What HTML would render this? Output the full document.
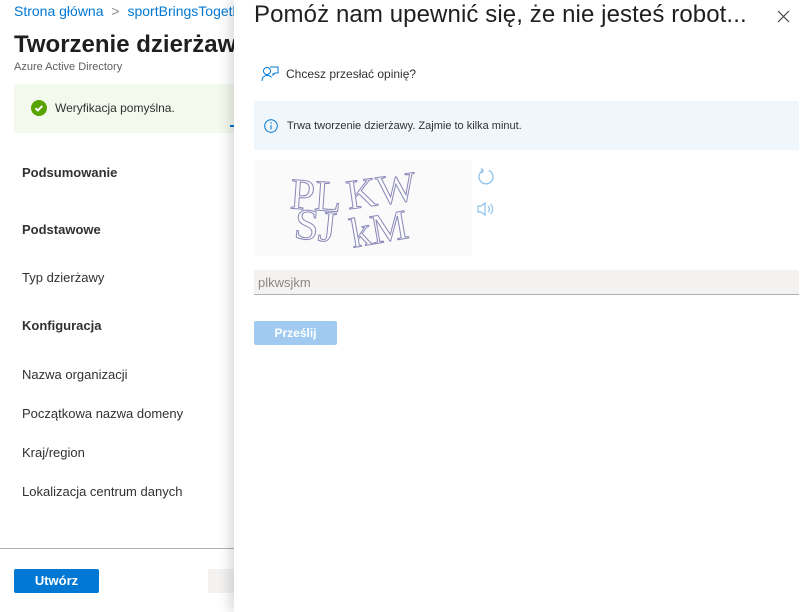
<!DOCTYPE html>
<html><head><meta charset="utf-8"><style>
*{margin:0;padding:0;box-sizing:border-box}
body{width:809px;height:612px;overflow:hidden;position:relative;font-family:"Segoe UI","Liberation Sans",sans-serif;background:#fff;color:#323130}
.a{position:absolute;white-space:nowrap}
</style></head><body>
<div class="a" style="left:14px;top:3px;font-size:14px;color:#0078d4">Strona główna <span style="color:#888;margin:0 4px">&gt;</span> sportBringsTogether</div>
<div class="a" style="left:14px;top:31px;font-size:24px;font-weight:600;color:#201f1e">Tworzenie dzierżawy</div>
<div class="a" style="left:14px;top:61px;font-size:11px;color:#605e5c">Azure Active Directory</div>
<div class="a" style="left:14px;top:84px;width:230px;height:49px;background:#f3f9ed"></div>
<svg class="a" style="left:31px;top:100px" width="16" height="16"><circle cx="8" cy="8" r="8" fill="#57a300"/><path d="M4.5 8.2l2.3 2.3 4.5-4.6" stroke="#fff" stroke-width="2" fill="none"/></svg>
<div class="a" style="left:55px;top:101px;font-size:12px">Weryfikacja pomyślna.</div>
<div class="a" style="left:230px;top:125px;width:8px;height:2px;background:#0078d4"></div>
<div class="a" style="left:22px;top:165px;font-size:13px;font-weight:600">Podsumowanie</div>
<div class="a" style="left:22px;top:222px;font-size:13px;font-weight:600">Podstawowe</div>
<div class="a" style="left:22px;top:270px;font-size:13px">Typ dzierżawy</div>
<div class="a" style="left:22px;top:318px;font-size:13px;font-weight:600">Konfiguracja</div>
<div class="a" style="left:22px;top:367px;font-size:13px">Nazwa organizacji</div>
<div class="a" style="left:22px;top:406px;font-size:13px">Początkowa nazwa domeny</div>
<div class="a" style="left:22px;top:445px;font-size:13px">Kraj/region</div>
<div class="a" style="left:22px;top:484px;font-size:13px">Lokalizacja centrum danych</div>
<div class="a" style="left:0;top:548px;width:240px;height:1px;background:#b0b0b0"></div>
<div class="a" style="left:14px;top:569px;width:85px;height:24px;background:#0078d4;border-radius:2px;color:#fff;font-size:13px;font-weight:600;text-align:center;line-height:24px">Utwórz</div>
<div class="a" style="left:208px;top:569px;width:40px;height:24px;background:#f3f2f1"></div>
<!-- panel -->
<div class="a" style="left:234px;top:0;width:575px;height:612px;background:#fff;box-shadow:-6px 0 10px rgba(0,0,0,0.12)"></div>
<div class="a" style="left:254px;top:1px;font-size:24px;letter-spacing:0.1px;color:#201f1e">Pomóż nam upewnić się, że nie jesteś robot...</div>
<svg class="a" style="left:777px;top:10px" width="13" height="13"><path d="M1 1l11 11M12 1L1 12" stroke="#444" stroke-width="1.2"/></svg>
<svg class="a" style="left:261px;top:66px" width="18" height="16" fill="none" stroke="#0078d4" stroke-width="1"><circle cx="6" cy="5" r="3.5"/><path d="M1 15c0-4 2.5-5.5 5-5.5s4 1 4.5 2"/><path d="M9 1h8v6h-3l-2 2V7"/></svg>
<div class="a" style="left:286px;top:67px;font-size:12px">Chcesz przesłać opinię?</div>
<div class="a" style="left:254px;top:101px;width:545px;height:49px;background:#eff6fc"></div>
<svg class="a" style="left:264px;top:119px" width="14" height="14"><circle cx="7" cy="7" r="6.3" fill="none" stroke="#0078d4"/><path d="M7 6v4.5" stroke="#0078d4"/><circle cx="7" cy="4" r=".7" fill="#0078d4"/></svg>
<div class="a" style="left:287px;top:120px;font-size:11px">Trwa tworzenie dzierżawy. Zajmie to kilka minut.</div>
<div class="a" style="left:254px;top:160px;width:218px;height:96px;background:#fbfafb"></div>
<svg class="a" style="left:254px;top:160px" width="218" height="96" font-family="Liberation Serif,serif" fill="none" stroke="#8a88b8" stroke-width="1">
<text x="36" y="50" font-size="44" transform="rotate(4 60 40)">PL</text><text x="92" y="47" font-size="42" transform="rotate(-8 110 30)">KW</text>
<text x="40" y="80" font-size="44" transform="rotate(6 60 70)">SJ</text><text x="96" y="82" font-size="42" transform="rotate(-10 130 70)">kM</text></svg>
<svg class="a" style="left:477px;top:167px" width="18" height="18"><path d="M12 3.5A7 7 0 1 1 6 3.5" stroke="#8cc3ee" stroke-width="1.3" fill="none"/><path d="M4 1.5l2.2 2-1.5 2.6" stroke="#8cc3ee" stroke-width="1.3" fill="none"/></svg>
<svg class="a" style="left:477px;top:201px" width="18" height="16" fill="none" stroke="#8cc3ee" stroke-width="1.2"><path d="M1 5h3l4-3v12l-4-3H1z"/><path d="M11 5a4 4 0 0 1 0 6M13.5 3a7 7 0 0 1 0 10"/></svg>
<div class="a" style="left:254px;top:270px;width:545px;height:25px;background:#f3f2f1;border-bottom:1px solid #b0b0b0;font-size:13px;color:#8a8886;padding:5px 0 0 4px">plkwsjkm</div>
<div class="a" style="left:254px;top:321px;width:83px;height:24px;background:#a0caf0;border-radius:2px;color:#fff;font-size:12px;font-weight:600;text-align:center;line-height:24px">Prześlij</div>
</body></html>
